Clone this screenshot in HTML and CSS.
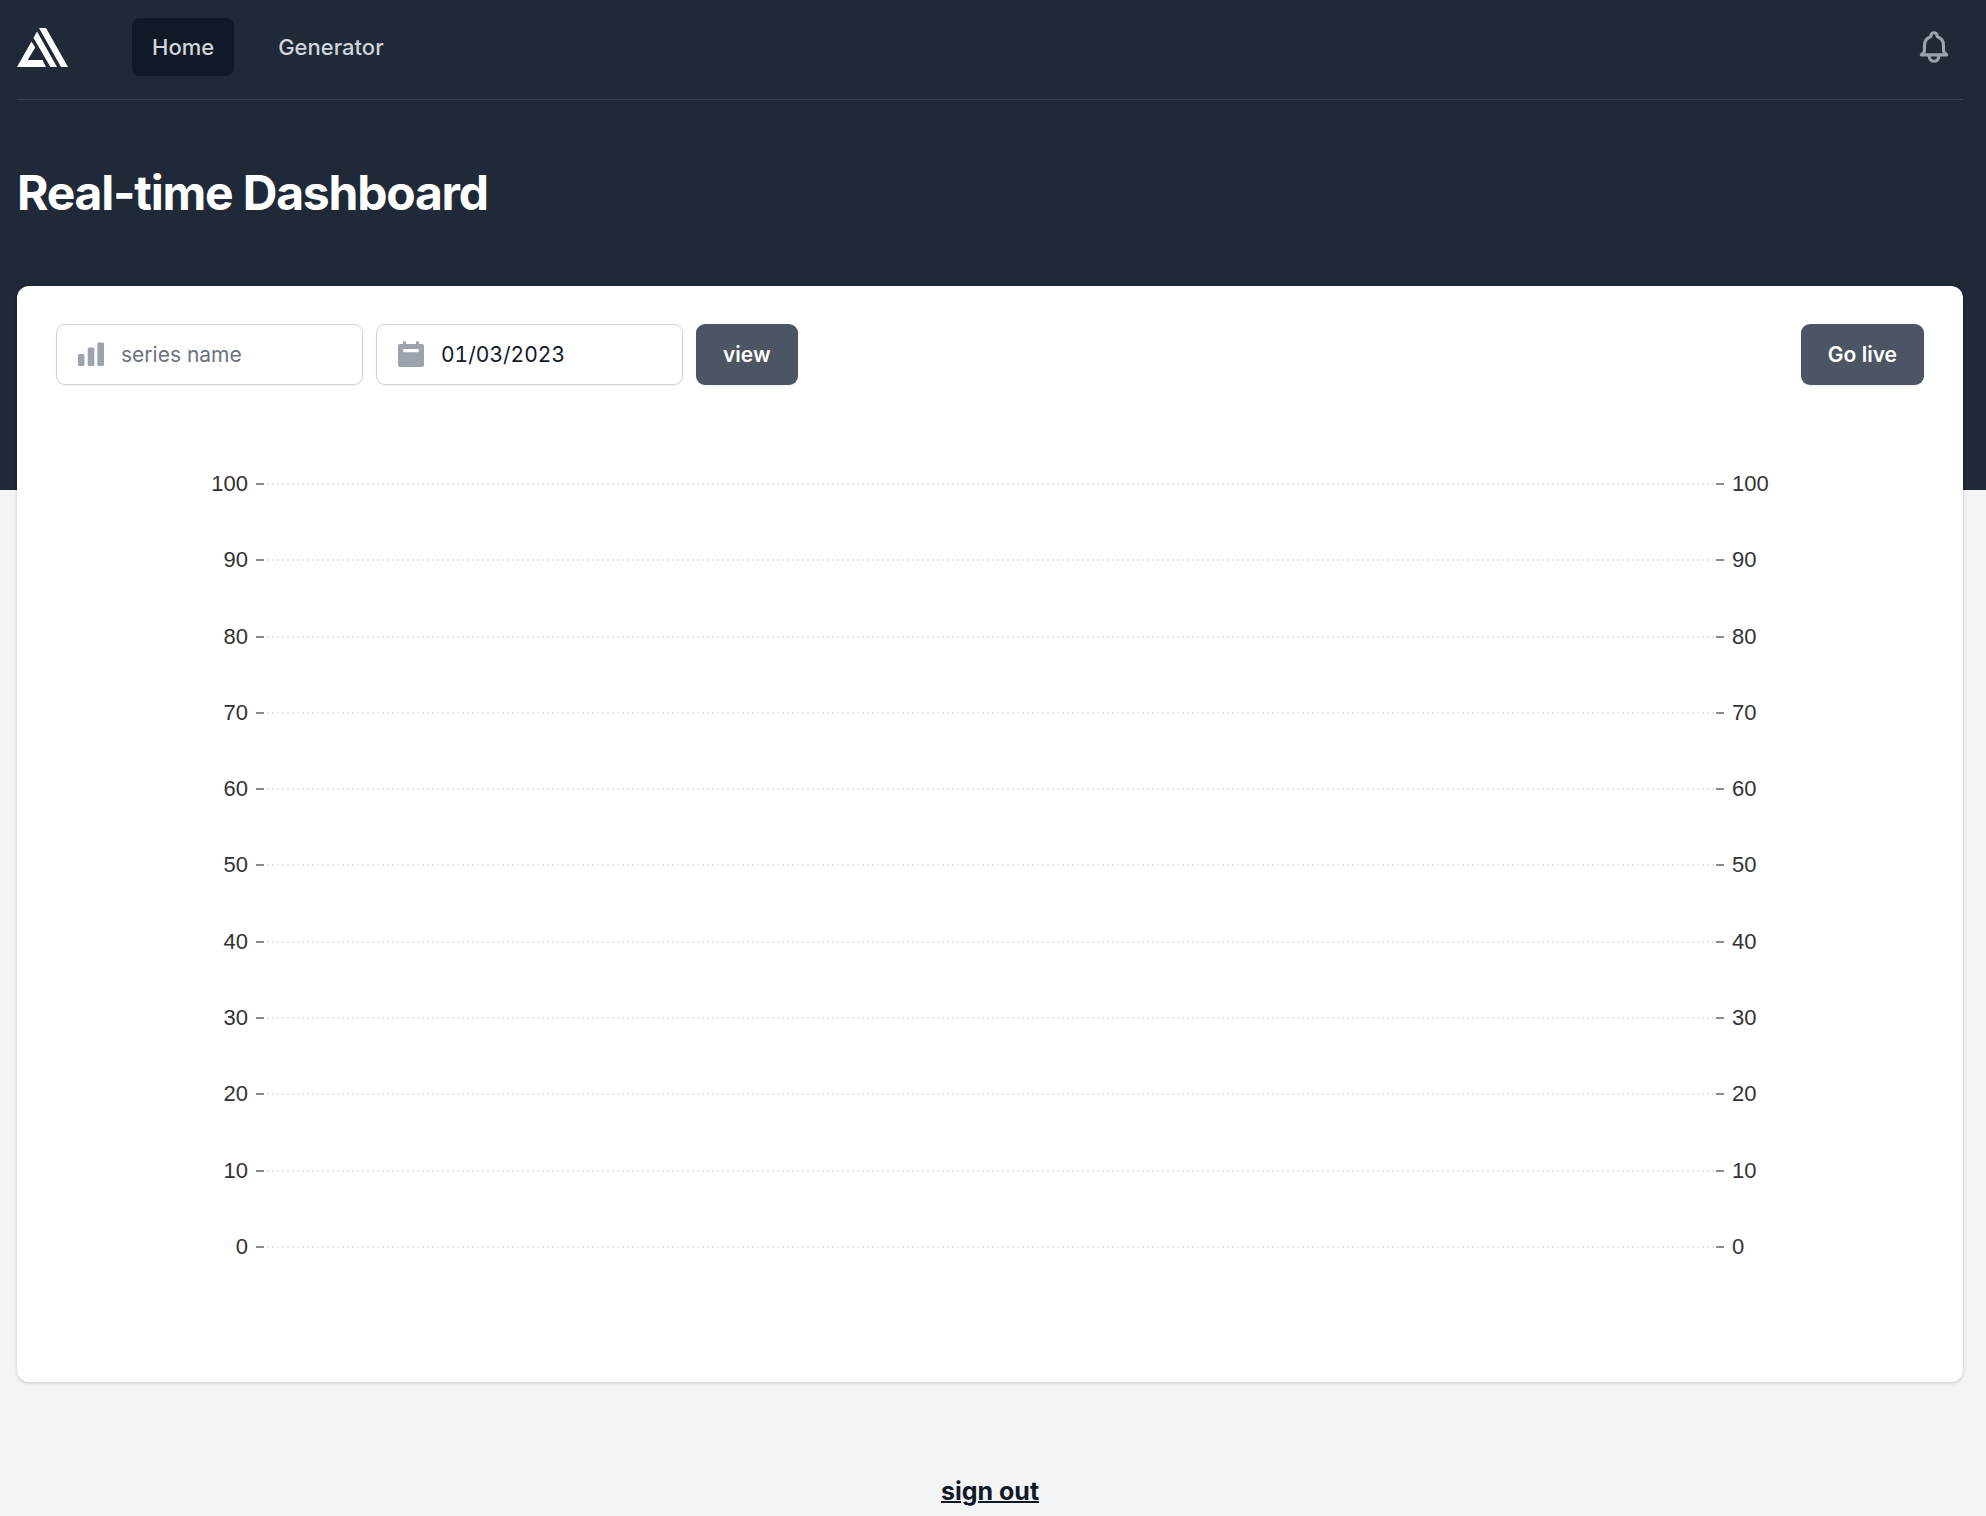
FILE: index.html
```html
<!DOCTYPE html>
<html lang="en">
<head>
<meta charset="utf-8">
<meta name="viewport" content="width=device-width, initial-scale=1">
<title>Real-time Dashboard</title>
<link rel="stylesheet" href="styles.css">
</head>
<body>
<div class="hero">
  <nav class="navbar">
    <a class="logo" href="#" aria-label="Dashboard home">
      <svg width="51" height="39" viewBox="0 0 51 39" fill="#fff" aria-hidden="true">
        <path d="M0 39 14.5 13.5 18.3 19.5 10.7 32H25.5L29 39Z"/>
        <path d="M16.5 10 20 3.5 40 39H33.5Z"/>
        <path d="M22 0H29L51 39H44Z"/>
      </svg>
    </a>
    <div class="nav-links">
      <a class="nav-link active" href="#">Home</a>
      <a class="nav-link" href="#">Generator</a>
    </div>
    <button class="bell" type="button" aria-label="View notifications">
      <svg width="38" height="38" viewBox="0 0 24 24" fill="none" stroke="currentColor" stroke-width="2" stroke-linecap="round" stroke-linejoin="round" aria-hidden="true">
        <path d="M15 17h5l-1.405-1.405A2.032 2.032 0 0118 14.158V11a6.002 6.002 0 00-4-5.659V5a2 2 0 10-4 0v.341C7.67 6.165 6 8.388 6 11v3.159c0 .538-.214 1.055-.595 1.436L4 17h5m6 0v1a3 3 0 11-6 0v-1m6 0H9"/>
      </svg>
    </button>
  </nav>
  <header class="page-header"><h1>Real-time Dashboard</h1></header>
</div>
<main>
  <section class="card">
    <form class="toolbar">
      <label class="field">
        <svg width="26" height="26" viewBox="0 0 26 26" fill="currentColor" aria-hidden="true">
          <rect x="0" y="13" width="6.4" height="12" rx="1.5"/>
          <rect x="9.7" y="6.5" width="6.6" height="18.5" rx="1.5"/>
          <rect x="19.4" y="1.5" width="6.6" height="23.5" rx="1.5"/>
        </svg>
        <input type="text" name="series" placeholder="series name" aria-label="Series name">
      </label>
      <label class="field">
        <svg width="26" height="26" viewBox="0 0 26 26" fill="currentColor" aria-hidden="true">
          <path fill-rule="evenodd" d="M2 3H5V1.5a1.5 1.5 0 013 0V3H18V1.5a1.5 1.5 0 013 0V3H24a2 2 0 012 2V24a2 2 0 01-2 2H2a2 2 0 01-2-2V5a2 2 0 012-2ZM6.5 8a1.6 1.6 0 000 3.2H19.5a1.6 1.6 0 000-3.2Z"/>
        </svg>
        <input class="date" type="text" name="date" value="01/03/2023" aria-label="Date">
      </label>
      <button class="btn" type="button">view</button>
      <button class="btn live" type="button">Go live</button>
    </form>
    <div class="chart">
      <div class="row"><span>100</span><i></i><span>100</span></div>
      <div class="row"><span>90</span><i></i><span>90</span></div>
      <div class="row"><span>80</span><i></i><span>80</span></div>
      <div class="row"><span>70</span><i></i><span>70</span></div>
      <div class="row"><span>60</span><i></i><span>60</span></div>
      <div class="row"><span>50</span><i></i><span>50</span></div>
      <div class="row"><span>40</span><i></i><span>40</span></div>
      <div class="row"><span>30</span><i></i><span>30</span></div>
      <div class="row"><span>20</span><i></i><span>20</span></div>
      <div class="row"><span>10</span><i></i><span>10</span></div>
      <div class="row"><span>0</span><i></i><span>0</span></div>
    </div>
  </section>
</main>
<footer><a class="sign-out" href="#">sign out</a></footer>
</body>
</html>
```
FILE: styles.css
```css
* { box-sizing: border-box; }
body {
  margin: 0;
  background: #f3f4f6;
  color: #111827;
  font-family: Inter, sans-serif;
  font-size: 22px;
  line-height: 30px;
}
button, input { font: inherit; }
.hero {
  background: #1f2937;
  padding: 0 23px 204px 17px;
}
.navbar {
  display: flex;
  align-items: center;
  height: 100px;
  padding-bottom: 5px;
  border-bottom: 1px solid #374151;
}
.logo { display: flex; }
.nav-links { display: flex; gap: 24px; margin-left: 64px; }
.nav-link {
  padding: 14px 20px;
  border-radius: 8px;
  color: #d1d5db;
  font-weight: 500;
  text-decoration: none;
}
.nav-link.active { background: #111827; }
.bell {
  display: flex;
  margin-left: auto;
  padding: 5px;
  border: 0;
  border-radius: 50%;
  margin-right: 5px;
  background: none;
  color: #9ca3af;
}
.page-header { padding: 63px 0; }
h1 {
  margin: 0;
  color: #fff;
  font-size: 48px;
  line-height: 60px;
  font-weight: 700;
  letter-spacing: -0.025em;
}
main { padding: 0 23px 0 17px; margin-top: -204px; }
.card {
  padding: 38px 39px 122px;
  border-radius: 12px;
  background: #fff;
  box-shadow: 0 1px 4px rgba(0, 0, 0, 0.1), 0 1px 3px rgba(0, 0, 0, 0.1);
}
.toolbar { display: flex; gap: 13px; font-size: 21px; }
.field {
  display: flex;
  align-items: center;
  gap: 17px;
  width: 307px;
  height: 61px;
  padding: 0 21px 2px;
  border: 1px solid #d1d5db;
  border-radius: 9px;
  box-shadow: 0 1px 2px rgba(0, 0, 0, 0.06);
  color: #9ca3af;
}
.field svg { flex: none; }
.field input {
  min-width: 0;
  flex: 1;
  padding: 2px 0 0;
  border: 0;
  outline: 0;
  background: none;
  color: #111827;
}
.field input::placeholder { color: #6b7280; opacity: 1; }
.field .date { font-variant-numeric: tabular-nums; }
.btn {
  padding: 0 27px;
  border: 0;
  border-radius: 9px;
  background: #4b5563;
  box-shadow: 0 1px 2px rgba(0, 0, 0, 0.06);
  color: #fff;
  font-weight: 600;
}
.live { margin-left: auto; }
.chart {
  display: flex;
  flex-direction: column;
  justify-content: space-between;
  height: 789px;
  margin-top: 86px;
  padding: 0 123px;
  color: #333;
  font-family: "Liberation Sans", Arial, sans-serif;
  line-height: 26px;
}
.row { display: flex; align-items: center; gap: 8px; }
.row span { width: 69px; text-align: right; }
.row span:last-child { text-align: left; }
.row i {
  flex: 1;
  height: 2px;
  border: solid #8a8a8a;
  border-width: 0 8px;
  background: repeating-linear-gradient(90deg, transparent 0 3px, #e6e6e6 3px 5px);
}
footer { padding: 94px 23px 9px 17px; text-align: center; }
.sign-out {
  color: #111827;
  font-size: 25px;
  font-weight: 700;
  text-decoration-thickness: 2px;
}
```
